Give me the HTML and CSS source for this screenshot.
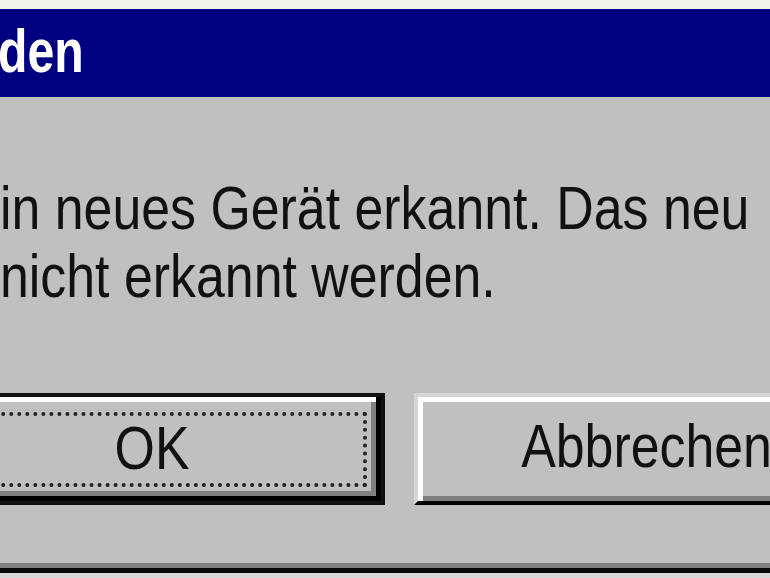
FILE: index.html
```html
<!DOCTYPE html>
<html lang="de">
<head>
<meta charset="utf-8">
<title>Neue Hardwarekomponente gefunden</title>
<link rel="stylesheet" href="styles.css">
</head>
<body>
<div class="screen">
  <div class="top-edge"></div>
  <div class="titlebar"><span class="title">den</span></div>
  <div class="client">
    <div class="msg">
      <div class="line">in neues Gerät erkannt. Das neu</div>
      <div class="line">nicht erkannt werden.</div>
    </div>
    <div class="buttons">
      <button class="btn btn-default" type="button">
        <span class="focus"><span class="label">OK</span></span>
      </button>
      <button class="btn" type="button">
        <span class="plain"><span class="label">Abbrechen</span></span>
      </button>
    </div>
  </div>
  <div class="edge-dark"></div>
  <div class="edge-black"></div>
  <div class="edge-light"></div>
</div>
</body>
</html>
```
FILE: styles.css
```css
html, body {
  margin: 0;
  padding: 0;
}
body {
  width: 770px;
  height: 578px;
  overflow: hidden;
  background: #c0c0c0;
  font-family: "Liberation Sans", Arial, sans-serif;
}
.screen {
  display: flex;
  flex-direction: column;
  width: 770px;
  height: 578px;
  overflow: hidden;
}
.top-edge {
  height: 9px;
  background: #f1f1ea;
  flex: none;
}
.titlebar {
  height: 80px;
  padding-top: 8px;
  background: #000080;
  flex: none;
}
.title {
  display: block;
  width: max-content;
  margin-left: -2px;
  color: #fff;
  font-weight: bold;
  font-size: 61px;
  line-height: 68px;
  transform: scaleX(0.79);
  transform-origin: left center;
  white-space: nowrap;
}
.client {
  flex: 1;
  background: #c0c0c0;
  overflow: hidden;
}
.msg {
  margin-top: 77px;
  color: #111;
  font-size: 61px;
  line-height: 68px;
}
.line {
  width: max-content;
  white-space: nowrap;
  transform: scaleX(0.85);
  transform-origin: left center;
}
.buttons {
  display: flex;
  gap: 29px;
  margin-top: 83px;
  margin-left: -81px;
  width: max-content;
}
.btn {
  appearance: none;
  box-sizing: border-box;
  width: 466px;
  height: 112px;
  margin: 0;
  padding: 0;
  background: #c0c0c0;
  font: inherit;
  color: #111;
  display: flex;
  cursor: default;
  border: 4px solid;
  border-color: #d6d6d6 #000 #000 #d6d6d6;
  box-shadow: inset 5px 5px 0 #fff, inset -5px -5px 0 #808080;
}
.btn-default {
  border-color: #111;
  box-shadow: inset -5px -5px 0 #000, inset 5px 5px 0 #fff, inset -10px -10px 0 #808080;
  padding: 15px 14px 14px 14px;
}
.focus {
  flex: 1;
  border: 4px dotted #222;
  display: flex;
  align-items: center;
  justify-content: center;
  padding-bottom: 4px;
}
.plain {
  flex: 1;
  display: flex;
  align-items: center;
  justify-content: center;
  padding-bottom: 6px;
}
.label {
  display: inline-block;
  font-size: 61px;
  line-height: 68px;
  white-space: nowrap;
  transform: scaleX(0.85);
  transform-origin: center center;
}
.edge-dark {
  height: 5px;
  background: #808080;
  flex: none;
}
.edge-black {
  height: 5px;
  background: #0a0a0a;
  flex: none;
}
.edge-light {
  height: 5px;
  background: #d8d8d8;
  flex: none;
}
```
